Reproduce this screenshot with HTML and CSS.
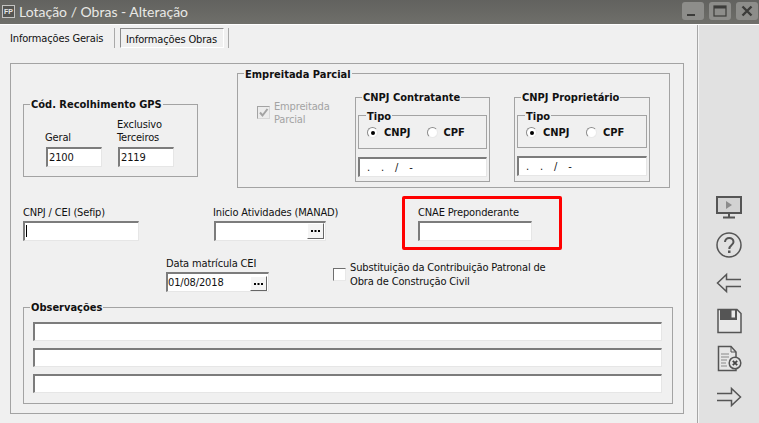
FILE: index.html
```html
<!DOCTYPE html>
<html lang="pt">
<head>
<meta charset="utf-8">
<title>Lotação / Obras - Alteração</title>
<link rel="stylesheet" href="styles.css">
</head>
<body>
<div class="window">
  <header class="titlebar">
    <span class="app-icon">FP</span>
    <h1 class="title">Lotação / Obras - Alteração</h1>
    <div class="win-buttons">
      <span class="win-btn"><svg width="22" height="18" viewBox="0 0 22 18"><rect x="5" y="12" width="8" height="2" fill="#3c3c3a"/></svg></span>
      <span class="win-btn"><svg width="22" height="18" viewBox="0 0 22 18"><rect x="5" y="4" width="12" height="10" fill="none" stroke="#3c3c3a" stroke-width="1.2"/><rect x="5" y="4" width="12" height="2.5" fill="#3c3c3a"/></svg></span>
      <span class="win-btn"><svg width="22" height="18" viewBox="0 0 22 18"><path d="M6.5 4.500L15.500 13.500M15.500 4.500L6.500 13.500" stroke="#3c3c3a" stroke-width="2.400"/></svg></span>
    </div>
  </header>
  <div class="content">
    <main class="main">
      <nav class="tabs">
        <span class="tab">Informações Gerais</span>
        <span class="tab-sep"></span>
        <span class="tab tab-active">Informações Obras</span>
        <span class="tab-sep tab-sep-end"></span>
      </nav>
      <section class="panel">
        <div class="row-top">
          <fieldset class="group group-gps">
            <legend>Cód. Recolhimento GPS</legend>
            <div class="gps-fields">
              <div class="field">
                <label class="lbl">Geral</label>
                <div class="input">2100</div>
              </div>
              <div class="field">
                <label class="lbl">Exclusivo<br>Terceiros</label>
                <div class="input">2119</div>
              </div>
            </div>
          </fieldset>
          <fieldset class="group group-emp">
            <legend>Empreitada Parcial</legend>
            <div class="emp-body">
              <div class="emp-check">
                <span class="check check-disabled"><svg width="11" height="11" viewBox="0 0 11 11"><path d="M2 5.500L4.500 8.500L9.500 2" fill="none" stroke="#a3a3a3" stroke-width="2"/></svg></span>
                <span class="emp-label">Empreitada<br>Parcial</span>
              </div>
              <fieldset class="group group-cnpj">
                <legend>CNPJ Contratante</legend>
                <fieldset class="group group-tipo">
                  <legend>Tipo</legend>
                  <div class="radios">
                    <span class="radio radio-on"></span><span class="radio-lbl">CNPJ</span>
                    <span class="radio"></span><span class="radio-lbl">CPF</span>
                  </div>
                </fieldset>
                <div class="input input-mask">. . / -</div>
              </fieldset>
              <fieldset class="group group-cnpj group-cnpj-prop">
                <legend>CNPJ Proprietário</legend>
                <fieldset class="group group-tipo group-tipo-short">
                  <legend>Tipo</legend>
                  <div class="radios">
                    <span class="radio radio-on"></span><span class="radio-lbl">CNPJ</span>
                    <span class="radio"></span><span class="radio-lbl">CPF</span>
                  </div>
                </fieldset>
                <div class="input input-mask">. . / -</div>
              </fieldset>
            </div>
          </fieldset>
        </div>
        <div class="row-fields">
          <div class="field field-cei">
            <label class="lbl">CNPJ / CEI (Sefip)</label>
            <div class="input"><span class="caret"></span></div>
          </div>
          <div class="field field-inicio">
            <label class="lbl">Inicio Atividades (MANAD)</label>
            <div class="input input-btn"><span class="dots"><svg width="9" height="2" viewBox="0 0 9 2"><path d="M0 0h2v2H0zM3.500 0h2v2h-2zM7 0h2v2H7z" fill="#000"/></svg></span></div>
          </div>
          <div class="field field-cnae">
            <label class="lbl">CNAE Preponderante</label>
            <div class="input"></div>
            <span class="highlight"></span>
          </div>
        </div>
        <div class="row-date">
          <div class="field field-date">
            <label class="lbl">Data matrícula CEI</label>
            <div class="input input-btn input-date">01/08/2018<span class="dots"><svg width="9" height="2" viewBox="0 0 9 2"><path d="M0 0h2v2H0zM3.500 0h2v2h-2zM7 0h2v2H7z" fill="#000"/></svg></span></div>
          </div>
          <div class="subst">
            <span class="check"></span>
            <span class="subst-label">Substituição da Contribuição Patronal de<br>Obra de Construção Civil</span>
          </div>
        </div>
        <fieldset class="group group-obs">
          <legend>Observações</legend>
          <div class="input input-obs"></div>
          <div class="input input-obs"></div>
          <div class="input input-obs"></div>
        </fieldset>
      </section>
    </main>
    <aside class="sidebar">
      <span class="tool"><svg width="28" height="28" viewBox="0 0 28 28"><rect x="2" y="4" width="24" height="16" fill="#d2d2d2" stroke="#555" stroke-width="2"/><path d="M11 8L17 12L11 16Z" fill="#8b8b8b"/><path d="M14 20V24M8 24.500H20" stroke="#555" stroke-width="2"/></svg></span>
      <span class="tool"><svg width="28" height="28" viewBox="0 0 28 28"><circle cx="14" cy="14" r="12" fill="none" stroke="#555" stroke-width="1.500"/><path d="M10 11C10 5.500 18.500 6 18.500 11C18.500 14 14.300 14 14.300 18" fill="none" stroke="#555" stroke-width="2"/><rect x="13" y="19.500" width="2.500" height="2.500" fill="#555"/></svg></span>
      <span class="tool"><svg width="28" height="28" viewBox="0 0 28 28"><path d="M26 10.500H11.500V5.500L2.500 14L11.500 22.500V17.500H26" fill="none" stroke="#555" stroke-width="1.500"/></svg></span>
      <span class="tool"><svg width="28" height="28" viewBox="0 0 28 28"><path d="M3 2.500H22L26 6.500V25.500H3Z" fill="#e8e8e8" stroke="#555" stroke-width="1.500"/><path d="M5 3H22V13H5Z" fill="#555"/><rect x="16.500" y="3.500" width="3.500" height="7" fill="#e8e8e8"/></svg></span>
      <span class="tool"><svg width="28" height="28" viewBox="0 0 28 28"><path d="M3.500 1.500H16L21 7V25.500H3.500Z" fill="#e6e6e6" stroke="#555" stroke-width="1.500"/><path d="M16 1.500V7H21" fill="none" stroke="#555" stroke-width="1"/><path d="M6 9H14M6 12H14M6 15H12M6 18H11M6 21H12" stroke="#888" stroke-width="1.200"/><circle cx="20" cy="18" r="5.800" fill="#e1e1e1" stroke="#555" stroke-width="1.500"/><path d="M17.800 15.800L22.200 20.200M22.200 15.800L17.800 20.200" stroke="#444" stroke-width="1.800"/></svg></span>
      <span class="tool"><svg width="28" height="28" viewBox="0 0 28 28"><path d="M2 10.500H16.500V5.500L25.500 14L16.500 22.500V17.500H2" fill="none" stroke="#555" stroke-width="1.500"/></svg></span>
    </aside>
  </div>
</div>
</body>
</html>
```
FILE: styles.css
```css
* { box-sizing: border-box; }
html, body { margin: 0; padding: 0; }
body {
  width: 759px;
  height: 423px;
  overflow: hidden;
  background: #f0f0f0;
  font: 11px/13px "DejaVu Sans Condensed", "DejaVu Sans", sans-serif;
  font-stretch: condensed;
  letter-spacing: -0.15px;
  color: #111;
}
.window { display: flex; flex-direction: column; height: 423px; }

.titlebar {
  height: 25px;
  flex: none;
  display: flex;
  align-items: flex-start;
  padding: 5px 1px 0 2px;
  background: linear-gradient(#62625f, #6f6f6a);
  border-bottom: 1px solid #fff;
}
.app-icon {
  width: 13px;
  height: 13px;
  margin-right: 4px;
  border: 1px solid #c4c4c2;
  background: #555552;
  color: #e6e6e6;
  font: bold 7px/11px "Liberation Sans", sans-serif;
  letter-spacing: 0;
  text-align: center;
}
.title {
  margin: 0;
  flex: 1;
  font: 400 14px/14px Lato, sans-serif;
  letter-spacing: 0;
  color: #e9e9e6;
}
.win-buttons { display: flex; gap: 5px; margin-top: -3px; }
.win-btn {
  width: 22px;
  height: 18px;
  border-radius: 3px;
  background: #8d8d8a;
  display: block;
}
.win-btn svg { display: block; }

.content { flex: 1; display: flex; min-height: 0; }
.main { width: 697px; flex: none; padding-left: 10px; }
.sidebar {
  flex: 1;
  display: flex;
  flex-direction: column;
  align-items: center;
  padding-top: 163px;
  border-left: 1px solid #a6a6a6;
  box-shadow: inset 1px 0 0 #f4f4f4;
  background: #e1e1e1;
}
.tool { height: 38px; display: flex; align-items: center; flex: none; }
.tool svg { display: block; }

.tabs { height: 38px; display: flex; align-items: flex-start; }
.tab { margin-top: 7px; width: 93px; white-space: nowrap; }
.tab-sep {
  width: 1px;
  height: 20px;
  margin: 3px 0 0 11px;
  background: #a9a9a9;
}
.tab-active {
  width: 104px;
  height: 20px;
  margin: 3px 0 0 5px;
  padding: 4px 0 0 5px;
  border: 1px solid;
  border-color: #8a8a8a #fff #fff #8a8a8a;
}
.tab-sep-end { margin-left: 4px; }

.panel {
  width: 674px;
  height: 351px;
  padding: 2px 0 0 12px;
  border: 1px solid #a3a3a3;
}

.group {
  margin: 0;
  padding: 0;
  min-width: 0;
  border: 1px solid #a3a3a3;
}
.group legend {
  position: relative;
  top: 1px;
  padding: 0 1px;
  margin-left: 6px;
  font-weight: bold;
  letter-spacing: 0;
  line-height: 14px;
  white-space: nowrap;
}

.row-top { display: flex; gap: 39px; align-items: flex-start; }
.group-gps { width: 175px; height: 80px; margin-top: 31px; }
.gps-fields { display: flex; gap: 16px; align-items: flex-end; padding: 7px 0 0 22px; }
.gps-fields .field { width: 56px; }
.gps-fields .lbl { margin-left: -1px; margin-bottom: 3px; }

.field { display: flex; flex-direction: column; flex: none; }
.lbl { display: block; white-space: nowrap; }

.input {
  height: 20px;
  padding: 2px 0 0 1px;
  background: #fff;
  border-style: solid;
  border-width: 2px 1px 1px 2px;
  border-color: #7c7c7c #e6e6e6 #e6e6e6 #7c7c7c;
  line-height: 14px;
}

.group-emp { width: 433px; height: 122px; }
.group-emp > legend { top: 2px; }
.emp-body { display: flex; padding: 10px 0 0 19px; }
.emp-check { width: 98px; display: flex; gap: 4px; padding-top: 10px; color: #a3a3a3; }
.check {
  width: 13px;
  height: 13px;
  flex: none;
  display: block;
  background: #fff;
  border: 1px solid;
  border-color: #6f6f6f #e8e8e8 #e8e8e8 #6f6f6f;
}
.check-disabled { margin-top: 6px; background: #ececec; border-color: #a3a3a3 #d8d8d8 #d8d8d8 #a3a3a3; }
.check svg { display: block; }

.group-cnpj { width: 135px; height: 92px; padding: 4px 2px 0; }
.group-cnpj > legend { margin-left: 4px; }
.group-cnpj-prop { width: 136px; margin-left: 24px; }
.group-tipo { height: 41px; }
.group-tipo-short { height: 40px; }
.group-tipo > legend { margin-left: 7px; top: 2px; }
.radios {
  display: flex;
  align-items: center;
  padding: 4px 0 0 8px;
  font-weight: bold;
  letter-spacing: 0;
}
.radio {
  width: 11px;
  height: 11px;
  flex: none;
  border-radius: 50%;
  background: #fff;
  border: 1px solid;
  border-color: #8c8c8c #e9e9e9 #e9e9e9 #8c8c8c;
  display: flex;
  align-items: center;
  justify-content: center;
}
.radio-on::after {
  content: "";
  width: 4px;
  height: 4px;
  border-radius: 50%;
  background: #000;
}
.radio-lbl { margin-left: 6px; width: 43px; }
.input-mask {
  margin-top: 8px;
  padding-left: 7px;
  word-spacing: 8px;
}

.row-fields { display: flex; margin-top: 18px; }
.field-cei { width: 116px; }
.field-inicio { width: 112px; margin-left: 75px; }
.field-cnae { width: 114px; margin-left: 92px; position: relative; }
.row-fields .lbl, .row-date .lbl { margin-bottom: 2px; }
.row-fields .field-inicio .lbl { margin-left: -1px; }
.highlight {
  position: absolute;
  left: -16px;
  top: -10px;
  width: 160px;
  height: 54px;
  border: 3px solid #f00;
  border-radius: 2px;
}
.caret { display: block; width: 1px; height: 12px; background: #000; }

.input-btn { display: flex; justify-content: flex-end; align-items: flex-start; padding: 0 1px 0 0; }
.input-date { justify-content: space-between; padding: 2px 1px 0 0; }
.input-date .dots { margin-top: 0; height: 15px; }
.dots {
  width: 17px;
  height: 16px;
  flex: none;
  display: flex;
  align-items: center;
  justify-content: center;
  background: #f4f4f4;
  border: 1px solid;
  border-color: #fff #666 #666 #fff;
}
.dots svg { display: block; }

.row-date { display: flex; margin: 16px 0 0 143px; align-items: flex-start; }
.field-date { width: 103px; }
.subst { display: flex; gap: 4px; margin: 4px 0 0 64px; line-height: 14px; }
.subst .check { margin-top: 7px; }
.subst-label { white-space: nowrap; }

.group-obs { width: 650px; height: 104px; margin-top: 8px; padding: 8px 10px 0 9px; }
.group-obs > legend { margin-left: -3px; }
.input-obs { height: 19px; margin-bottom: 7px; }
```
